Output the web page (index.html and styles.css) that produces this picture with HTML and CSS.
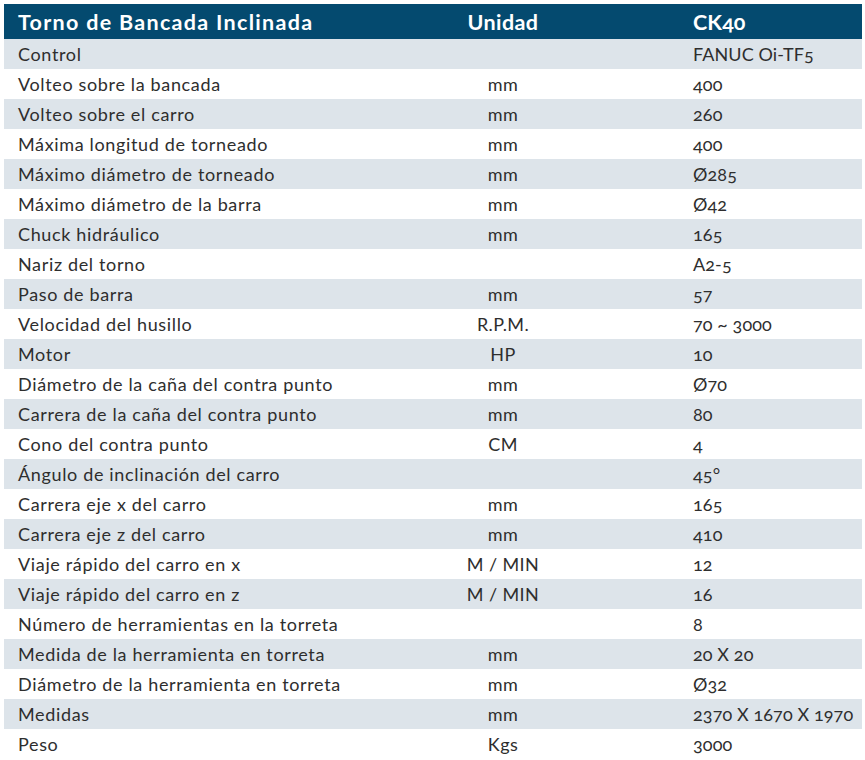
FILE: index.html
```html
<!DOCTYPE html>
<html lang="es">
<head>
<meta charset="utf-8">
<title>Torno de Bancada Inclinada CK40</title>
<link rel="stylesheet" href="styles.css">
</head>
<body>
<table class="spec">
  <colgroup>
    <col class="c-name">
    <col class="c-unit">
    <col class="c-val">
  </colgroup>
  <thead>
    <tr><th class="name">Torno de Bancada Inclinada</th><th class="unit">Unidad</th><th class="val">CK40</th></tr>
  </thead>
  <tbody>
    <tr><td class="name">Control</td><td class="unit"></td><td class="val">FANUC Oi-TF5</td></tr>
    <tr><td class="name">Volteo sobre la bancada</td><td class="unit">mm</td><td class="val">400</td></tr>
    <tr><td class="name">Volteo sobre el carro</td><td class="unit">mm</td><td class="val">260</td></tr>
    <tr><td class="name">Máxima longitud de torneado</td><td class="unit">mm</td><td class="val">400</td></tr>
    <tr><td class="name">Máximo diámetro de torneado</td><td class="unit">mm</td><td class="val">Ø285</td></tr>
    <tr><td class="name">Máximo diámetro de la barra</td><td class="unit">mm</td><td class="val">Ø42</td></tr>
    <tr><td class="name">Chuck hidráulico</td><td class="unit">mm</td><td class="val">165</td></tr>
    <tr><td class="name">Nariz del torno</td><td class="unit"></td><td class="val">A2-5</td></tr>
    <tr><td class="name">Paso de barra</td><td class="unit">mm</td><td class="val">57</td></tr>
    <tr><td class="name">Velocidad del husillo</td><td class="unit">R.P.M.</td><td class="val">70 ~ 3000</td></tr>
    <tr><td class="name">Motor</td><td class="unit">HP</td><td class="val">10</td></tr>
    <tr><td class="name">Diámetro de la caña del contra punto</td><td class="unit">mm</td><td class="val">Ø70</td></tr>
    <tr><td class="name">Carrera de la caña del contra punto</td><td class="unit">mm</td><td class="val">80</td></tr>
    <tr><td class="name">Cono del contra punto</td><td class="unit">CM</td><td class="val">4</td></tr>
    <tr><td class="name">Ángulo de inclinación del carro</td><td class="unit"></td><td class="val">45°</td></tr>
    <tr><td class="name">Carrera eje x del carro</td><td class="unit">mm</td><td class="val">165</td></tr>
    <tr><td class="name">Carrera eje z del carro</td><td class="unit">mm</td><td class="val">410</td></tr>
    <tr><td class="name">Viaje rápido del carro en x</td><td class="unit">M / MIN</td><td class="val">12</td></tr>
    <tr><td class="name">Viaje rápido del carro en z</td><td class="unit">M / MIN</td><td class="val">16</td></tr>
    <tr><td class="name">Número de herramientas en la torreta</td><td class="unit"></td><td class="val">8</td></tr>
    <tr><td class="name">Medida de la herramienta en torreta</td><td class="unit">mm</td><td class="val">20 X 20</td></tr>
    <tr><td class="name">Diámetro de la herramienta en torreta</td><td class="unit">mm</td><td class="val">Ø32</td></tr>
    <tr><td class="name">Medidas</td><td class="unit">mm</td><td class="val">2370 X 1670 X 1970</td></tr>
    <tr><td class="name">Peso</td><td class="unit">Kgs</td><td class="val">3000</td></tr>
  </tbody>
</table>
</body>
</html>
```

FILE: styles.css
```css
html, body {
  margin: 0;
  padding: 0;
  background: #ffffff;
}

body {
  padding: 4px 3px 0 4px;
  font-family: Lato, "Noto Sans", sans-serif;
  color: #2e2e2e;
  font-variant-numeric: oldstyle-nums;
}

.spec {
  width: 858px;
  border-collapse: collapse;
  table-layout: fixed;
}

.c-name { width: 323px; }
.c-unit { width: 352px; }
.c-val { width: 183px; }

.spec th {
  height: 35px;
  padding: 0 14px;
  background: #044a6f;
  color: #ffffff;
  font-weight: 700;
  font-size: 21.5px;
  letter-spacing: 1.3px;
  text-align: left;
  white-space: nowrap;
}

.spec td {
  height: 30px;
  padding: 0 14px;
  font-size: 18px;
  letter-spacing: 0.65px;
  white-space: nowrap;
}

.spec tbody tr:nth-child(odd) td {
  background: #dde4ea;
}

.spec .unit {
  text-align: center;
  padding: 0;
  letter-spacing: 0.4px;
}

.spec .val {
  letter-spacing: 0.1px;
}
```
